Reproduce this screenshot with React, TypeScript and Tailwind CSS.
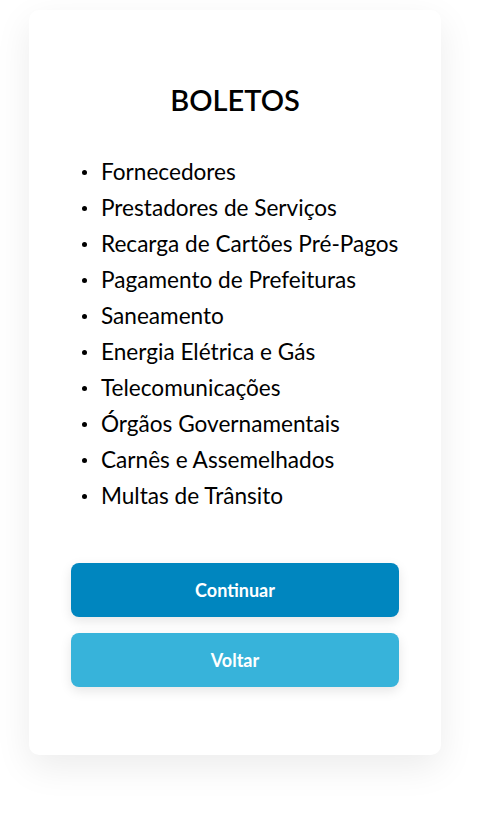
const items = [
  "Fornecedores",
  "Prestadores de Serviços",
  "Recarga de Cartões Pré-Pagos",
  "Pagamento de Prefeituras",
  "Saneamento",
  "Energia Elétrica e Gás",
  "Telecomunicações",
  "Órgãos Governamentais",
  "Carnês e Assemelhados",
  "Multas de Trânsito",
];

export default function App() {
  return (
    <div
      className="min-h-[817px] bg-white pt-[10px] pl-[29px]"
      style={{ fontFamily: "Lato, 'Noto Sans', sans-serif" }}
    >
      <div className="w-[412px] rounded-[10px] bg-white px-[42px] pt-[72px] pb-[68px] shadow-[0_12px_36px_rgba(0,0,0,0.08)]">
        <h1 className="text-center text-[29px] font-semibold leading-[36px] text-black">BOLETOS</h1>
        <ul className="mt-[36px] text-[22.6px] leading-[36px] text-black">
          {items.map((item) => (
            <li key={item} className="flex items-center">
              <span className="ml-[11px] mr-[14px] h-[5px] w-[5px] rounded-full bg-black" />
              {item}
            </li>
          ))}
        </ul>
        <div className="mt-[49px] flex flex-col gap-4">
          <button className="h-[54px] rounded-lg bg-[#0086bf] text-[18px] font-bold text-white shadow-[0_4px_12px_rgba(0,0,0,0.1)]">
            Continuar
          </button>
          <button className="h-[54px] rounded-lg bg-[#37b3da] text-[18px] font-bold text-white shadow-[0_4px_12px_rgba(0,0,0,0.1)]">
            Voltar
          </button>
        </div>
      </div>
    </div>
  );
}
